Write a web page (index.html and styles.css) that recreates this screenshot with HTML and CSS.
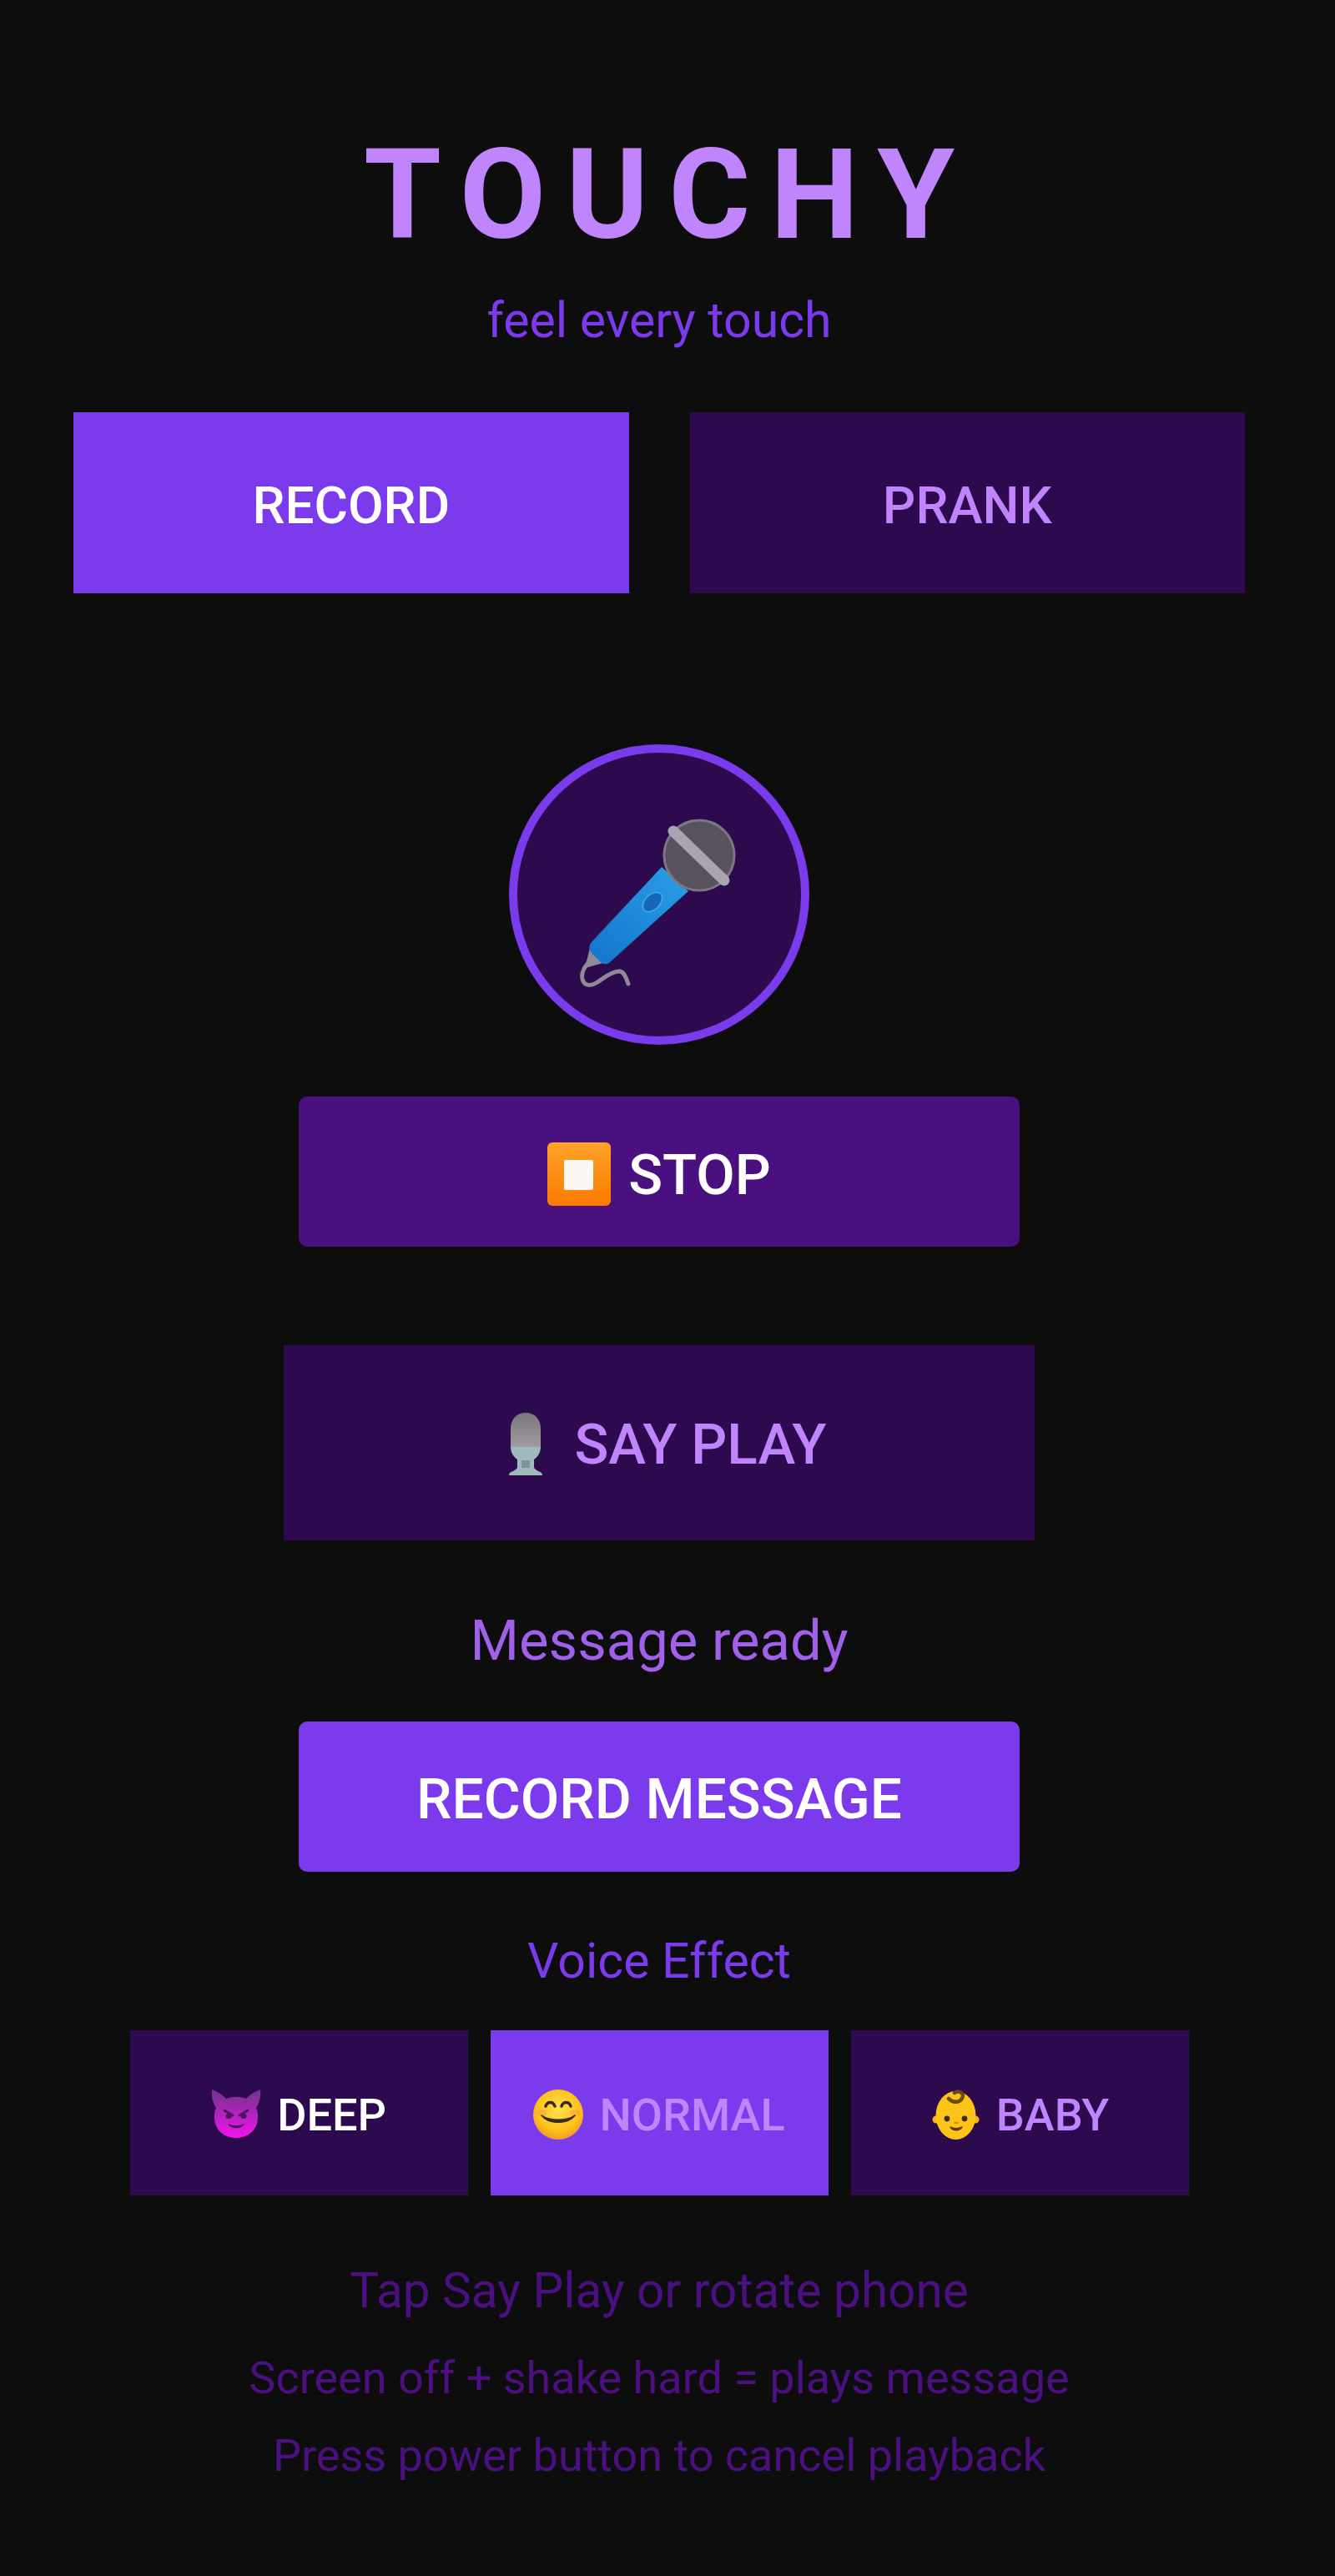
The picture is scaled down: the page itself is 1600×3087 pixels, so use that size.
FILE: index.html
```html
<!DOCTYPE html>
<html lang="en">
<head>
    <meta charset="UTF-8">
    <meta name="viewport" content="width=device-width, initial-scale=1.0">
    <title>Touchy</title>
    <link rel="stylesheet" href="styles.css">
</head>
<body>
    <main class="screen">
        <h1 class="title">TOUCHY</h1>
        <p class="subtitle">feel every touch</p>

        <div class="tabs">
            <button class="tab tab-active">RECORD</button>
            <button class="tab">PRANK</button>
        </div>

        <div class="mic-circle">
            <svg class="mic-icon" viewBox="0 0 220 220">
                <defs>
                    <linearGradient id="handle" x1="0" y1="1" x2="1" y2="0">
                        <stop offset="0" stop-color="#1474cc"/>
                        <stop offset="1" stop-color="#2b9fe6"/>
                    </linearGradient>
                </defs>
                <path d="M24 183C18 190 16 198 19 204C23 211 31 209 39 203C47 197 56 191 63 192C68 193 70 199 73 207" fill="none" stroke="#8f8a96" stroke-width="5" stroke-linecap="round"/>
                <path d="M28 166L44 180L23 186Z" fill="#8f8a96" stroke="#8f8a96" stroke-width="3" stroke-linejoin="round"/>
                <path d="M113 67L145 96L50 182Q44 185 40 181L29 170Q24 165 28 158Z" fill="url(#handle)"/>
                <ellipse cx="102" cy="109" rx="14" ry="9" transform="rotate(-45 102 109)" fill="#1468b8" stroke="#3aa6e8" stroke-width="2"/>
                <circle cx="158" cy="53" r="42" fill="#57525c" stroke="#7d7684" stroke-width="3"/>
                <path d="M127 24L188 83" stroke="#aaa4b2" stroke-width="13" stroke-linecap="round"/>
            </svg>
        </div>

        <button class="action action-stop">
            <svg class="stop-icon" viewBox="0 0 76 76">
                <defs>
                    <linearGradient id="stopFill" x1="0" y1="0" x2="0" y2="1">
                        <stop offset="0" stop-color="#ffa328"/>
                        <stop offset="1" stop-color="#fb7a00"/>
                    </linearGradient>
                </defs>
                <rect width="76" height="76" rx="6" fill="url(#stopFill)"/>
                <rect x="20" y="21" width="35" height="36" rx="2" fill="#fbf8f4"/>
            </svg>
            STOP
        </button>

        <button class="say-play">
            <svg class="studio-icon" viewBox="0 0 40 76">
                <defs>
                    <linearGradient id="studioHead" x1="0" y1="0" x2="0" y2="1">
                        <stop offset="0" stop-color="#7a757c"/>
                        <stop offset="1" stop-color="#a09c9f"/>
                    </linearGradient>
                </defs>
                <path d="M2 42V20C2 8 10 1 20 1C30 1 38 8 38 20V42Z" fill="url(#studioHead)"/>
                <path d="M2 42H38C38 50 33 55 30 57V66C30 68 32 69 35 71C38 72 40 73 40 76H0C0 73 2 72 5 71C8 69 10 68 10 66V57C7 55 2 50 2 42Z" fill="#9fb9bd"/>
                <path d="M15 58H25V67H15Z" fill="#7d969b"/>
            </svg>
            SAY PLAY
        </button>

        <p class="status">Message ready</p>

        <button class="action action-record">RECORD MESSAGE</button>

        <p class="effect-label">Voice Effect</p>

        <div class="effects">
            <button class="effect effect-deep">
                <svg class="effect-icon" viewBox="0 0 60 60">
                    <defs>
                        <linearGradient id="devilFill" x1="0" y1="0" x2="0" y2="1">
                            <stop offset="0" stop-color="#70348c"/>
                            <stop offset="1" stop-color="#f411ee"/>
                        </linearGradient>
                    </defs>
                    <path d="M1 0C9 3 14 7 18 11C25 8 35 8 42 11C46 7 51 3 59 0C60 8 58 16 54 22C56 26 56 30 56 33C56 48 45 58 30 58C15 58 4 48 4 33C4 30 4 26 6 22C2 16 0 8 1 0Z" fill="url(#devilFill)"/>
                    <path d="M16 25L26 31M44 25L34 31" stroke="#4a1560" stroke-width="3" stroke-linecap="round"/>
                    <ellipse cx="21" cy="32" rx="3.5" ry="3" fill="#4a1560"/>
                    <ellipse cx="39" cy="32" rx="3.5" ry="3" fill="#4a1560"/>
                    <path d="M20 41C26 44 34 44 40 41C37 48 23 48 20 41Z" fill="#4a1560"/>
                </svg>
                DEEP
            </button>
            <button class="effect effect-active">
                <svg class="effect-icon" viewBox="0 0 60 60">
                    <defs>
                        <radialGradient id="smileFill" cx="0.5" cy="0.4" r="0.6">
                            <stop offset="0" stop-color="#ffe04e"/>
                            <stop offset="0.7" stop-color="#fcc21b"/>
                            <stop offset="1" stop-color="#f59a2a"/>
                        </radialGradient>
                    </defs>
                    <circle cx="30" cy="30" r="30" fill="url(#smileFill)"/>
                    <ellipse cx="10" cy="28" rx="6" ry="4" fill="#f48a5a" opacity="0.35"/>
                    <ellipse cx="50" cy="28" rx="6" ry="4" fill="#f48a5a" opacity="0.35"/>
                    <path d="M15 20C17 14 24 14 26 20M34 20C36 14 43 14 45 20" fill="none" stroke="#3a2a1a" stroke-width="3.5" stroke-linecap="round"/>
                    <path d="M10 31C20 38 40 38 50 31C42 42 18 42 10 31Z" fill="#3a2a1a" stroke="#3a2a1a" stroke-width="1.5" stroke-linejoin="round"/>
                </svg>
                NORMAL
            </button>
            <button class="effect">
                <svg class="effect-icon" viewBox="0 0 60 60">
                    <circle cx="7" cy="36" r="4.5" fill="#f5b50f"/>
                    <circle cx="54" cy="36" r="4.5" fill="#f5b50f"/>
                    <ellipse cx="30.5" cy="31" rx="24" ry="29" fill="#fcc419"/>
                    <path d="M22 11C28 17 37 16 39 8C39 3 33 1 29 4" fill="none" stroke="#6b4a12" stroke-width="4.5" stroke-linecap="round"/>
                    <circle cx="20" cy="35" r="3.4" fill="#3f2c10"/>
                    <circle cx="41" cy="35" r="3.4" fill="#3f2c10"/>
                    <path d="M29 40H33" stroke="#d98a10" stroke-width="2" stroke-linecap="round"/>
                    <path d="M24 45C28 47 34 47 38 45C35 50 27 50 24 45Z" fill="#5c3c10" stroke="#5c3c10" stroke-width="1.5" stroke-linejoin="round"/>
                </svg>
                BABY
            </button>
        </div>

        <p class="hint hint-tap">Tap Say Play or rotate phone</p>
        <p class="hint hint-shake">Screen off + shake hard = plays message</p>
        <p class="hint hint-power">Press power button to cancel playback</p>
    </main>
</body>
</html>
```

FILE: styles.css
```css
* {
    box-sizing: border-box;
}
body {
    margin: 0;
    background: #0d0d0d;
    font-family: Roboto, "Liberation Sans", sans-serif;
}
button {
    border: none;
    padding: 0;
    font-family: inherit;
    cursor: pointer;
}
p {
    margin: 0;
}
.screen {
    width: 1580px;
    height: 3087px;
    padding-top: 146px;
    display: flex;
    flex-direction: column;
    align-items: center;
    overflow: hidden;
}
.title {
    margin: 0;
    height: 176px;
    padding-left: 24px;
    line-height: 176px;
    font-size: 150px;
    font-weight: 700;
    letter-spacing: 24px;
    color: #c084fc;
}
.subtitle {
    margin-top: 27px;
    height: 70px;
    line-height: 70px;
    font-size: 59px;
    color: #7c3aed;
}
.tabs {
    margin-top: 75px;
    width: 1404px;
    display: flex;
    gap: 73px;
}
.tab {
    flex: 1;
    height: 217px;
    padding-top: 6px;
    background: #2d0a4e;
    color: #c084fc;
    font-size: 62px;
    font-weight: 500;
}
.tab-active {
    background: #7c3aed;
    color: #fff;
}
.mic-circle {
    margin-top: 181px;
    width: 360px;
    height: 360px;
    padding-top: 20px;
    border: 10px solid #7c3aed;
    border-radius: 50%;
    background: #2d0a4e;
    display: flex;
    justify-content: center;
    align-items: center;
}
.mic-icon {
    width: 220px;
    height: 220px;
}
.action {
    width: 864px;
    height: 180px;
    border-radius: 10px;
    color: #fff;
    font-size: 67.5px;
    font-weight: 500;
    display: flex;
    justify-content: center;
    align-items: center;
}
.action-stop {
    margin-top: 62px;
    padding-top: 6px;
    gap: 21px;
    background: #4a1080;
}
.stop-icon {
    width: 76px;
    height: 76px;
}
.say-play {
    margin-top: 118px;
    width: 900px;
    height: 234px;
    padding-top: 2px;
    background: #2d0a4e;
    color: #c084fc;
    font-size: 67.5px;
    font-weight: 500;
    display: flex;
    justify-content: center;
    align-items: center;
}
.studio-icon {
    width: 40px;
    height: 76px;
    margin: 0 38px 0 21px;
}
.status {
    margin-top: 85px;
    height: 70px;
    line-height: 70px;
    font-size: 67px;
    color: #a060ea;
}
.action-record {
    margin-top: 62px;
    padding-top: 4px;
    background: #7c3aed;
}
.effect-label {
    margin-top: 74px;
    height: 66px;
    line-height: 66px;
    font-size: 59px;
    color: #7c3aed;
}
.effects {
    margin-top: 50px;
    width: 1269px;
    display: flex;
    gap: 27px;
}
.effect {
    flex: 1;
    height: 198px;
    padding-top: 4px;
    background: #2d0a4e;
    color: #c084fc;
    font-size: 54px;
    font-weight: 500;
    display: flex;
    justify-content: center;
    align-items: center;
    gap: 19px;
}
.effect-deep {
    color: #fff;
}
.effect-active {
    background: #7c3aed;
}
.effect-icon {
    width: 60px;
    height: 60px;
}
.hint {
    height: 70px;
    line-height: 70px;
    font-size: 58.5px;
    color: #4a1080;
}
.hint-tap {
    margin-top: 79px;
}
.hint-shake {
    margin-top: 35px;
    font-size: 54px;
}
.hint-power {
    margin-top: 23px;
    font-size: 54px;
}
```
